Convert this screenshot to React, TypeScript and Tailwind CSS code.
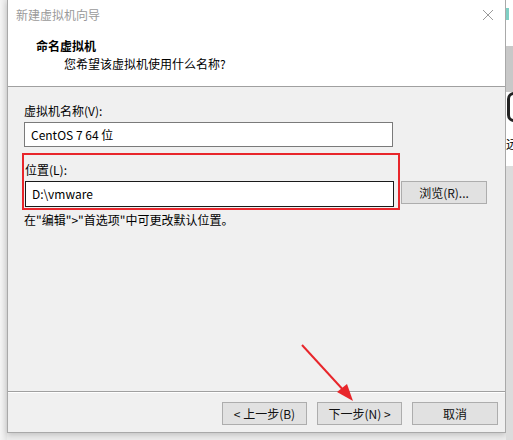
import React from "react";

const FONT = '"Noto Sans CJK SC", "Microsoft YaHei", "Liberation Sans", sans-serif';

function Btn({ label, className = "" }: { label: string; className?: string }) {
  return (
    <button
      className={`h-[23px] w-[85px] border border-[#adadad] bg-[#e1e1e1] text-[12px] text-[#111] leading-none ${className}`}
    >
      {label}
    </button>
  );
}

export default function App() {
  return (
    <div
      className="relative flex h-[440px] w-[513px] overflow-hidden bg-[#ececec]"
      style={{ fontFamily: FONT }}
    >
      {/* 左侧阴影 */}
      <div className="w-[7px] shrink-0 bg-gradient-to-r from-[#f4f4f4] to-[#e6e6e6]" />

      {/* 向导对话框 */}
      <div className="flex h-[433px] w-[499px] shrink-0 flex-col border-x border-b border-[#a9a9a9] bg-[#f0f0f0] shadow-[0_2px_6px_rgba(0,0,0,0.18)]">
        <div className="bg-white">
          <div className="flex h-[30px] items-center justify-between pl-[8px] pr-[11px]">
            <span className="text-[12px] text-[#9a9a9a]">新建虚拟机向导</span>
            <svg width="12" height="12" viewBox="0 0 12 12" className="mt-[-1px]">
              <path d="M1 1L11 11M11 1L1 11" stroke="#9a9a9a" strokeWidth="1" />
            </svg>
          </div>
          <div className="h-[57px] border-b border-[#a0a0a0] pl-[28px]">
            <div className="pt-[7px] text-[12px] font-bold leading-[17px] text-black">命名虚拟机</div>
            <div className="pl-[28px] text-[12px] leading-[19px] text-black">您希望该虚拟机使用什么名称?</div>
          </div>
        </div>

        <div className="flex-1 pl-[16px] pt-[16px] text-[12px] text-black">
          <div className="leading-[16px]">虚拟机名称(V):</div>
          <div className="mt-[3px] flex h-[25px] w-[369px] items-center border border-[#7a7a7a] bg-white pl-[6px]">
            CentOS 7 64 位
          </div>
          <div className="mt-[6px] ml-[-2px] w-[378px] border-2 border-[#e8262b] pl-[1px] pb-[1px] pt-[7px]">
            <div className="leading-[16px]">位置(L):</div>
            <div className="mt-[3px] flex h-[26px] w-[369px] items-center border border-[#1a1a1a] bg-white pl-[6px]">
              D:\vmware
            </div>
          </div>
          <div className="relative">
            <div className="absolute left-[377px] top-[-29px]">
              <Btn label="浏览(R)..." className="w-[86px]" />
            </div>
          </div>
          <div className="mt-[1px] leading-[18px]">{'在"编辑">"首选项"中可更改默认位置。'}</div>
        </div>

        <div className="h-[41px] border-t border-[#a0a0a0]">
          <div className="h-[1px] bg-white" />
          <div className="flex justify-end gap-[10px] pr-[7px] pt-[9px]">
            <Btn label="< 上一步(B)" />
            <Btn label="下一步(N) >" />
            <Btn label="取消" className="w-[86px]" />
          </div>
        </div>
      </div>

      {/* 右侧背景窗口 */}
      <div className="flex w-[7px] shrink-0 flex-col">
        <div className="h-[46px] bg-white">
          <div className="mt-[8px] h-[12px] w-[3px] bg-[#7fcfc4]" />
        </div>
        <div className="h-[46px] bg-[#c8c8c8]" />
        <div className="h-[30px] bg-white">
          <div className="ml-[1px] h-[30px] w-[14px] rounded-full border-[3px] border-[#222]" />
        </div>
        <div className="h-[44px] overflow-visible bg-white">
          <div className="mt-[16px] w-[20px] text-[12px] leading-none text-black">远</div>
        </div>
        <div className="flex-1 bg-[#dcdcdc]" />
      </div>

      {/* 红色箭头 */}
      <svg className="pointer-events-none absolute left-0 top-0" width="513" height="440">
        <line x1="302" y1="345" x2="346" y2="393" stroke="#e8262b" strokeWidth="2" />
        <polygon points="353,401 337,392 347,384" fill="#e8262b" />
      </svg>
    </div>
  );
}
